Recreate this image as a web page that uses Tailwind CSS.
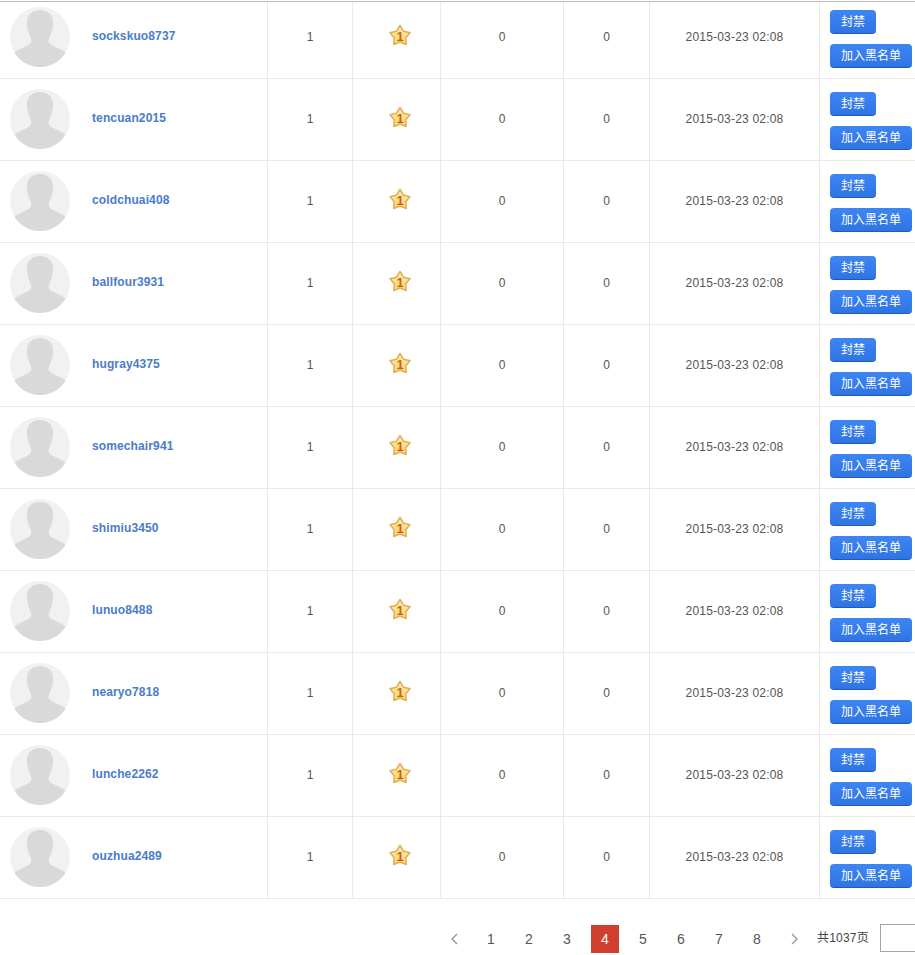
<!DOCTYPE html>
<html lang="en">
<head>
  <meta charset="UTF-8">
  <title>用户列表</title>
  <script src="https://cdn.jsdelivr.net/npm/@tailwindcss/browser@4"></script>
</head>
<body class="bg-white overflow-hidden text-[12px] text-[#555]" style="font-family: 'Liberation Sans', 'Noto Sans CJK SC', sans-serif;">
  <div class="h-[955px] w-[915px] overflow-hidden pt-px">
    <div id="rows" class="border-t border-[#bbb]"></div>

    <div class="flex items-center pl-[439px] mt-[26px] w-[1000px]">
      <div class="w-7 h-7 flex items-center justify-center pl-px">
        <svg width="10" height="12" viewBox="0 0 10 12" fill="none" stroke="#999" stroke-width="1.4"><path d="M8 1 3 6l5 5"/></svg>
      </div>
      <div class="ml-2.5 w-7 h-7 flex items-center justify-center text-[14px] text-[#555]">1</div>
      <div class="ml-2.5 w-7 h-7 flex items-center justify-center text-[14px] text-[#555]">2</div>
      <div class="ml-2.5 w-7 h-7 flex items-center justify-center text-[14px] text-[#555]">3</div>
      <div class="ml-2.5 w-7 h-7 flex items-center justify-center text-[14px] text-white bg-[#d1402f]">4</div>
      <div class="ml-2.5 w-7 h-7 flex items-center justify-center text-[14px] text-[#555]">5</div>
      <div class="ml-2.5 w-7 h-7 flex items-center justify-center text-[14px] text-[#555]">6</div>
      <div class="ml-2.5 w-7 h-7 flex items-center justify-center text-[14px] text-[#555]">7</div>
      <div class="ml-2.5 w-7 h-7 flex items-center justify-center text-[14px] text-[#555]">8</div>
      <div class="ml-2.5 w-7 h-7 flex items-center justify-center">
        <svg width="10" height="12" viewBox="0 0 10 12" fill="none" stroke="#999" stroke-width="1.4"><path d="M2 1l5 5-5 5"/></svg>
      </div>
      <span class="ml-2 w-[63px] pb-0.5 text-[12px] tracking-[0.2px] text-[#444] whitespace-nowrap">共1037页</span>
      <input class="w-10 h-7 -mt-0.5 border border-[#a5a5a5] bg-white" type="text">
    </div>
  </div>

  <script>
    const names = ['sockskuo8737', 'tencuan2015', 'coldchuai408', 'ballfour3931', 'hugray4375', 'somechair941', 'shimiu3450', 'lunuo8488', 'nearyo7818', 'lunche2262', 'ouzhua2489'];
    const cell = 'flex items-center justify-center border-r border-[#e9e9e9]';

    document.getElementById('rows').innerHTML = names.map((name, i) => {
      const first = i === 0;
      const shift = first ? 'pb-[6px]' : 'pb-[2px]';
      const height = first ? 'h-[77px]' : 'h-[82px]';
      const nameUp = first ? '-mt-[3px]' : '-mt-[1px]';
      const starUp = first ? '-mt-[5px]' : '-mt-[3px]';
      const btnTop = first ? 'pt-[8px]' : 'pt-[13px]';
      const gradId = 'star' + i;
      return `
      <div class="grid grid-cols-[268px_85px_88px_123px_86px_170px_96px] ${height} border-b border-[#e9e9e9]">
        <div class="flex items-center border-r border-[#e9e9e9] pl-2.5 ${shift}">
          <svg width="60" height="60" viewBox="0 0 60 60" class="shrink-0">
            <clipPath id="clip${i}"><circle cx="30" cy="30" r="30"/></clipPath>
            <circle cx="30" cy="30" r="30" fill="#f1f1f1"/>
            <path clip-path="url(#clip${i})" fill="#d9d9d9" d="M30 3C38 3 43 8 43 15 43 21 42 25 40 29 38.500 32 38 35 40 37 42 38.500 50 42 55 45L55 60 5 60 5 45C10 42 18 38.500 20 37 22 35 21.500 32 20 29 18 25 17 21 17 15 17 8 22 3 30 3z"/>
          </svg>
          <a class="ml-[22px] ${nameUp} font-bold tracking-[0.12px] text-[#4a7cc9]">${name}</a>
        </div>
        <div class="${cell} ${shift}">1</div>
        <div class="${cell} ${shift}">
          <svg width="24" height="24" viewBox="0 0 24 24" class="ml-[7px] ${starUp}">
            <defs><linearGradient id="${gradId}" x1="0" y1="0" x2="0" y2="1"><stop offset="0" stop-color="#ffeab0"/><stop offset="1" stop-color="#ffd672"/></linearGradient></defs>
            <path fill="url(#${gradId})" stroke="#e2ad55" stroke-width="1.5" stroke-linejoin="round" d="M12 2.500l3.530 5.650 6.470 1.610-4.290 5.090.460 6.650L12 19l-6.170 2.500.460-6.650L2 9.760l6.470-1.610z"/>
            <text x="12" y="17.500" text-anchor="middle" font-size="13" font-weight="700" fill="#c4650c">1</text>
          </svg>
        </div>
        <div class="${cell} ${shift}">0</div>
        <div class="${cell} ${shift}">0</div>
        <div class="${cell} ${shift} tracking-[0.2px]">2015-03-23 02:08</div>
        <div class="flex flex-col items-start gap-2.5 pl-2.5 ${btnTop}">
          <button class="h-6 w-[46px] rounded-sm bg-gradient-to-b from-[#3d86f2] to-[#2f74e4] border-b border-[#1f5bb8] text-white">封禁</button>
          <button class="h-6 w-[82px] rounded-sm bg-gradient-to-b from-[#3d86f2] to-[#2f74e4] border-b border-[#1f5bb8] text-white">加入黑名单</button>
        </div>
      </div>`;
    }).join('');
  </script>
</body>
</html>
